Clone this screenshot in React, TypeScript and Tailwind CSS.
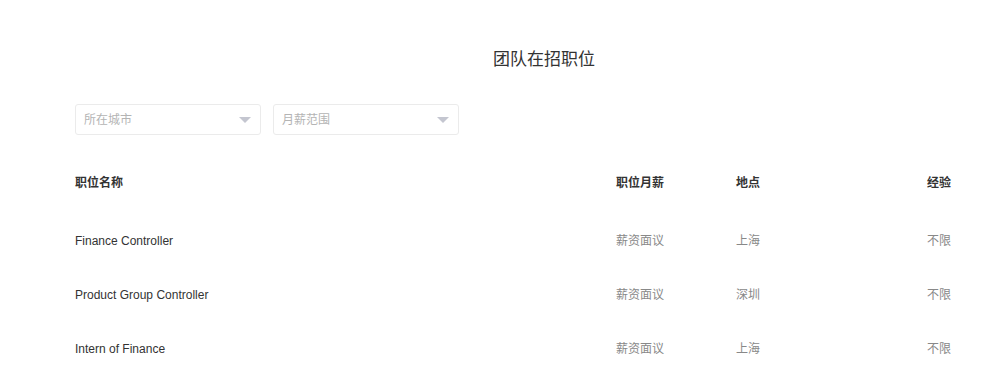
import React from "react";

const rows = [
  { name: "Finance Controller", salary: "薪资面议", loc: "上海", exp: "不限" },
  { name: "Product Group Controller", salary: "薪资面议", loc: "深圳", exp: "不限" },
  { name: "Intern of Finance", salary: "薪资面议", loc: "上海", exp: "不限" },
];

function Select({ label }: { label: string }) {
  return (
    <div className="flex h-[31px] w-[186px] items-center justify-between rounded-[3px] border border-[#ebebeb] pl-[8px] pr-[8px]">
      <span className="text-[12px] text-[#b4b4b4]">{label}</span>
      <span className="mr-[1px] h-0 w-0 border-x-[6px] border-t-[6px] border-x-transparent border-t-[#c4c6d0]" />
    </div>
  );
}

export default function App() {
  return (
    <div
      className="h-[390px] w-[1007px] bg-white"
      style={{ fontFamily: '"Liberation Sans", Arial, "Noto Sans CJK SC", sans-serif' }}
    >
      <div className="flex justify-center pl-[81px] pt-[48px]">
        <h1 className="text-[17px] leading-[24px] text-[#333]">团队在招职位</h1>
      </div>
      <div className="pl-[75px]">
        <div className="mt-[32px] flex gap-[12px]">
          <Select label="所在城市" />
          <Select label="月薪范围" />
        </div>
        <div className="mt-[21px] w-[876px]">
          <div className="grid h-[54px] grid-cols-[541px_120px_1fr_auto] items-center text-[12px] font-bold text-[#333]">
            <span>职位名称</span>
            <span>职位月薪</span>
            <span>地点</span>
            <span className="text-right">经验</span>
          </div>
          <div className="mt-[4px]">
            {rows.map((r, i) => (
              <div
                key={i}
                className="grid h-[54px] grid-cols-[541px_120px_1fr_auto] items-center text-[12px] text-[#888]"
              >
                <span className="text-[#333]">{r.name}</span>
                <span>{r.salary}</span>
                <span>{r.loc}</span>
                <span className="text-right">{r.exp}</span>
              </div>
            ))}
          </div>
        </div>
      </div>
    </div>
  );
}
